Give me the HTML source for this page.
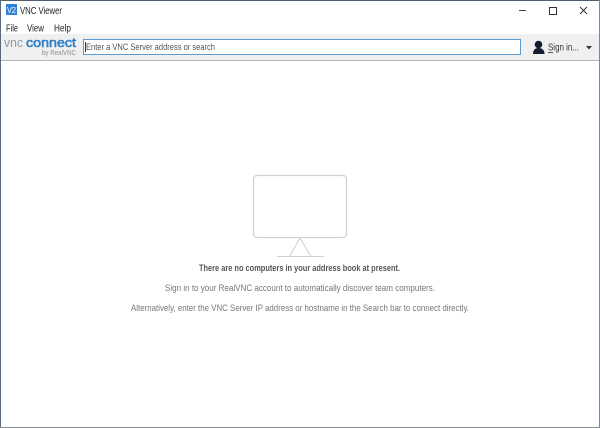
<!DOCTYPE html>
<html>
<head>
<meta charset="utf-8">
<title>VNC Viewer</title>
<style>
html,body{margin:0;padding:0;background:#fff;width:600px;height:428px;overflow:hidden}
svg{display:block}
text{font-family:"Liberation Sans",sans-serif}
.s{filter:blur(0.3px)}
</style>
</head>
<body>
<svg width="600" height="428" viewBox="0 0 600 428" xmlns="http://www.w3.org/2000/svg">
  <rect width="600" height="428" fill="#fff"/>
  <!-- toolbar -->
  <rect x="1" y="34" width="598" height="26" fill="#f0f0f0"/>
  <rect x="1" y="60" width="598" height="1" fill="#b4b4b4"/>
  <g class="s">
  <!-- app icon -->
  <rect x="6" y="4" width="11" height="11" fill="#2f83d6"/>
  <text x="7" y="13" font-size="8.500" fill="#fff" textLength="9" lengthAdjust="spacingAndGlyphs">V2</text>
  <!-- title -->
  <text x="20" y="14" font-size="10" fill="#222" textLength="42" lengthAdjust="spacingAndGlyphs">VNC Viewer</text>
  <!-- menu -->
  <text x="6" y="31.500" font-size="10" fill="#222" textLength="12" lengthAdjust="spacingAndGlyphs">File</text>
  <text x="27" y="31.500" font-size="10" fill="#222" textLength="17" lengthAdjust="spacingAndGlyphs">View</text>
  <text x="54" y="31.500" font-size="10" fill="#222" textLength="17" lengthAdjust="spacingAndGlyphs">Help</text>
  <!-- window controls -->
  <rect x="519" y="10" width="7" height="1" fill="#444"/>
  <rect x="549.500" y="7.500" width="7" height="7" fill="none" stroke="#333" stroke-width="1"/>
  <path d="M580 7L587 14M587 7L580 14" stroke="#333" stroke-width="1" fill="none"/>
  <!-- logo -->
  <text x="4" y="47" font-size="13" fill="#8b9aac" textLength="19" lengthAdjust="spacingAndGlyphs">vnc</text>
  <text x="26" y="47" font-size="13" fill="#2f7fc9" stroke="#2f7fc9" stroke-width="0.600" textLength="50" lengthAdjust="spacingAndGlyphs">connect</text>
  <text x="42" y="55" font-size="7" fill="#8a8f96" textLength="34" lengthAdjust="spacingAndGlyphs">by RealVNC</text>
  <!-- search box -->
  <rect x="83.500" y="39.500" width="437" height="15" fill="#fff" stroke="#5b9bd0" stroke-width="1"/>
  <rect x="85" y="42" width="1" height="10" fill="#333"/>
  <text x="86" y="50" font-size="9.500" fill="#555" textLength="129" lengthAdjust="spacingAndGlyphs">Enter a VNC Server address or search</text>
  <!-- user icon -->
  <circle cx="538.500" cy="44.500" r="3.800" fill="#141e33"/>
  <path d="M533 54C533 49.500 535.500 48 538.500 48C541.500 48 544.500 49.500 544.500 54Z" fill="#141e33"/>
  <text x="548" y="50.500" font-size="10" fill="#333" textLength="31" lengthAdjust="spacingAndGlyphs">Sign in...</text>
  <rect x="548" y="52" width="5" height="1" fill="#555"/>
  <path d="M586 46L592 46L589 49.500Z" fill="#333"/>
  <!-- monitor -->
  <rect x="253.500" y="175.500" width="93" height="62" rx="3.500" fill="#fff" stroke="#d2d2d2" stroke-width="1.200"/>
  <path d="M300 238L289.500 256.500M300 238L311 256.500" stroke="#d2d2d2" stroke-width="1.100" fill="none"/>
  <rect x="277" y="256" width="47" height="1" fill="#d0d0d0"/>
  <!-- messages -->
  <text x="199" y="271" font-size="9.500" font-weight="bold" fill="#555" textLength="201" lengthAdjust="spacingAndGlyphs">There are no computers in your address book at present.</text>
  <text x="165" y="291" font-size="9.500" fill="#777" textLength="270" lengthAdjust="spacingAndGlyphs">Sign in to your RealVNC account to automatically discover team computers.</text>
  <text x="131" y="311" font-size="9.500" fill="#777" textLength="338" lengthAdjust="spacingAndGlyphs">Alternatively, enter the VNC Server IP address or hostname in the Search bar to connect directly.</text>
  </g>
  <!-- window border -->
  <rect x="0" y="0" width="600" height="1" fill="#4f5f6e"/>
  <rect x="0" y="0" width="1" height="428" fill="#5a6a78"/>
  <rect x="599" y="0" width="1" height="428" fill="#7d8892"/>
  <rect x="0" y="427" width="600" height="1" fill="#8a8f94"/>
</svg>
</body>
</html>
